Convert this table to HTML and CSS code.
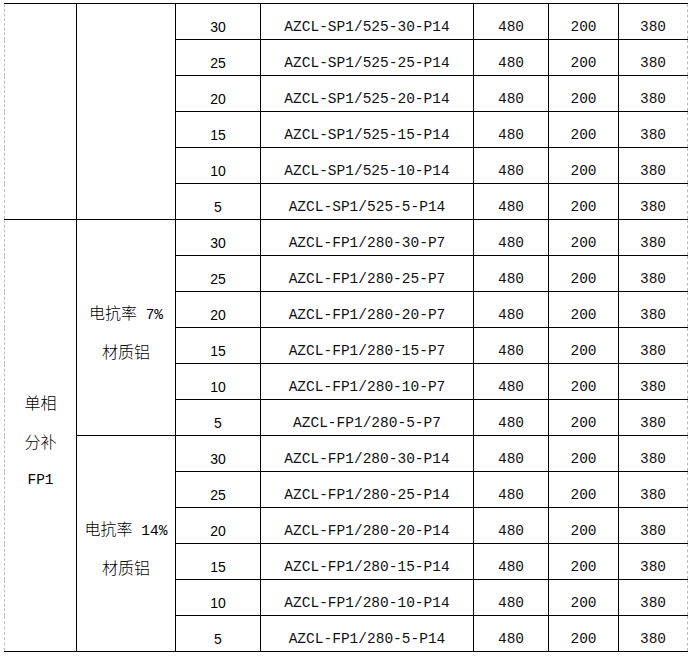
FILE: index.html
```html
<!DOCTYPE html>
<html>
<head>
<meta charset="utf-8">
<link rel="stylesheet" href="styles.css">
</head>
<body>
<table class="spec">
  <colgroup>
    <col class="c1"><col class="c2"><col class="c3"><col class="c4"><col class="c5"><col class="c6"><col class="c7">
  </colgroup>
  <tbody>
    <tr><td class="grp" rowspan="6"></td><td class="grp" rowspan="6"></td><td class="kv">30</td><td class="mono">AZCL-SP1/525-30-P14</td><td class="mono">480</td><td class="mono">200</td><td class="mono last">380</td></tr>
    <tr><td class="kv">25</td><td class="mono">AZCL-SP1/525-25-P14</td><td class="mono">480</td><td class="mono">200</td><td class="mono last">380</td></tr>
    <tr><td class="kv">20</td><td class="mono">AZCL-SP1/525-20-P14</td><td class="mono">480</td><td class="mono">200</td><td class="mono last">380</td></tr>
    <tr><td class="kv">15</td><td class="mono">AZCL-SP1/525-15-P14</td><td class="mono">480</td><td class="mono">200</td><td class="mono last">380</td></tr>
    <tr><td class="kv">10</td><td class="mono">AZCL-SP1/525-10-P14</td><td class="mono">480</td><td class="mono">200</td><td class="mono last">380</td></tr>
    <tr><td class="kv">5</td><td class="mono">AZCL-SP1/525-5-P14</td><td class="mono">480</td><td class="mono">200</td><td class="mono last">380</td></tr>

    <tr><td class="grp first" rowspan="12"><span class="cjk">单相</span><br><span class="cjk">分补</span><br><span class="lat">FP1</span></td><td class="grp" rowspan="6"><span class="cjk">电抗率</span><span class="lat"> 7%</span><br><span class="cjk">材质铝</span></td><td class="kv">30</td><td class="mono">AZCL-FP1/280-30-P7</td><td class="mono">480</td><td class="mono">200</td><td class="mono last">380</td></tr>
    <tr><td class="kv">25</td><td class="mono">AZCL-FP1/280-25-P7</td><td class="mono">480</td><td class="mono">200</td><td class="mono last">380</td></tr>
    <tr><td class="kv">20</td><td class="mono">AZCL-FP1/280-20-P7</td><td class="mono">480</td><td class="mono">200</td><td class="mono last">380</td></tr>
    <tr><td class="kv">15</td><td class="mono">AZCL-FP1/280-15-P7</td><td class="mono">480</td><td class="mono">200</td><td class="mono last">380</td></tr>
    <tr><td class="kv">10</td><td class="mono">AZCL-FP1/280-10-P7</td><td class="mono">480</td><td class="mono">200</td><td class="mono last">380</td></tr>
    <tr><td class="kv">5</td><td class="mono">AZCL-FP1/280-5-P7</td><td class="mono">480</td><td class="mono">200</td><td class="mono last">380</td></tr>

    <tr><td class="grp" rowspan="6"><span class="cjk">电抗率</span><span class="lat"> 14%</span><br><span class="cjk">材质铝</span></td><td class="kv">30</td><td class="mono">AZCL-FP1/280-30-P14</td><td class="mono">480</td><td class="mono">200</td><td class="mono last">380</td></tr>
    <tr><td class="kv">25</td><td class="mono">AZCL-FP1/280-25-P14</td><td class="mono">480</td><td class="mono">200</td><td class="mono last">380</td></tr>
    <tr><td class="kv">20</td><td class="mono">AZCL-FP1/280-20-P14</td><td class="mono">480</td><td class="mono">200</td><td class="mono last">380</td></tr>
    <tr><td class="kv">15</td><td class="mono">AZCL-FP1/280-15-P14</td><td class="mono">480</td><td class="mono">200</td><td class="mono last">380</td></tr>
    <tr><td class="kv">10</td><td class="mono">AZCL-FP1/280-10-P14</td><td class="mono">480</td><td class="mono">200</td><td class="mono last">380</td></tr>
    <tr><td class="kv">5</td><td class="mono">AZCL-FP1/280-5-P14</td><td class="mono">480</td><td class="mono">200</td><td class="mono last">380</td></tr>
  </tbody>
</table>
</body>
</html>
```

FILE: styles.css
```css
html, body {
  margin: 0;
  padding: 0;
  background: #ffffff;
}

body {
  padding: 3px 0 0 4px;
  font-family: "Liberation Mono", "Noto Sans CJK SC", monospace;
  color: #000;
}

.spec {
  border-collapse: collapse;
  table-layout: fixed;
  width: 683px;
  border-top: 1px solid #000;
  border-bottom: 1px solid #000;
  border-left: 1px dashed #bdbdbd;
  border-right: 1px dashed #bdbdbd;
}

.c1 { width: 72px; }
.c2 { width: 99px; }
.c3 { width: 85px; }
.c4 { width: 213px; }
.c5 { width: 75px; }
.c6 { width: 70px; }
.c7 { width: 69px; }

.spec tr {
  height: 36px;
}

.spec td {
  border: 1px solid #000;
  padding: 10px 0 0 0;
  text-align: center;
  vertical-align: middle;
  line-height: 20px;
  white-space: nowrap;
}

.spec td:first-child {
  border-left: 1px dashed #bdbdbd;
}

.spec td.last {
  border-right: 1px dashed #bdbdbd;
}

.spec td.grp {
  line-height: 36px;
}

.kv {
  font-family: "Liberation Sans", Arial, sans-serif;
  font-size: 14px;
}

.mono {
  font-family: "Liberation Mono", monospace;
  font-size: 14.5px;
  color: #111;
}

.cjk {
  font-family: "Noto Sans CJK SC", sans-serif;
  font-size: 16px;
  font-weight: 300;
}

.lat {
  font-family: "Liberation Mono", monospace;
  font-size: 14.5px;
}
```
